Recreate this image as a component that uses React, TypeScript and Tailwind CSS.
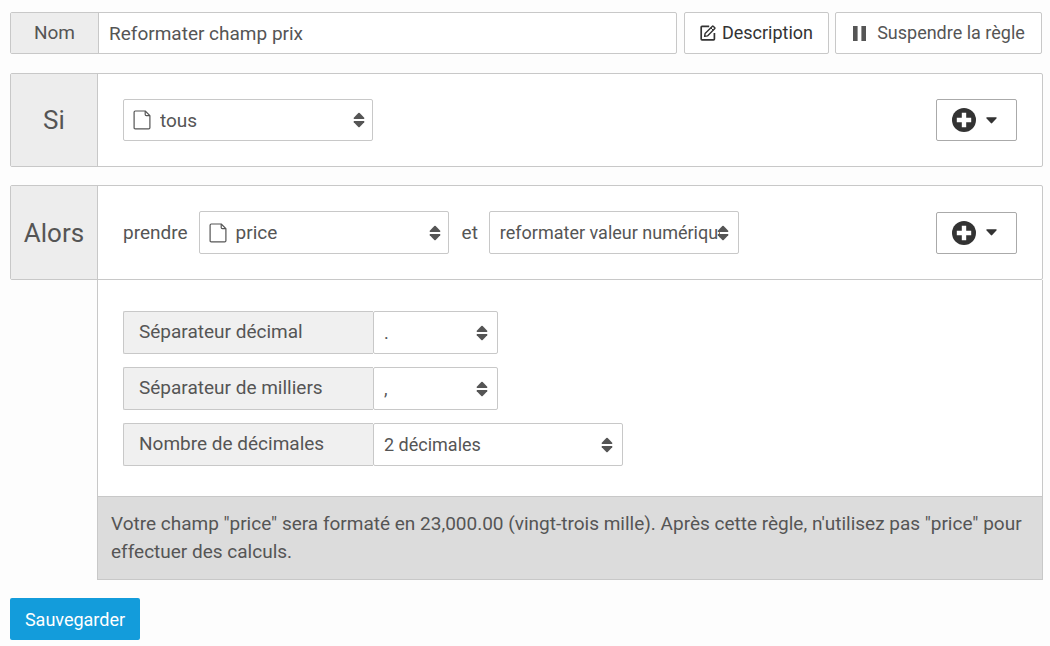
import {useState} from "react";
import type {ReactNode} from "react";

function SortArrows({className}: {className: string}) {
    return (
        <svg viewBox="0 0 12 16" className={`pointer-events-none absolute top-1/2 h-4 w-3 -translate-y-1/2 text-[#555] ${className}`} fill="currentColor" aria-hidden="true">
            <path d="M5.3 1 Q6 .3 6.7 1 L11.2 5.7 Q11.7 7 10.8 7 L1.2 7 Q.3 7 .8 5.7 Z" />
            <path d="M5.3 15 Q6 15.7 6.7 15 L11.2 10.3 Q11.7 9 10.8 9 L1.2 9 Q.3 9 .8 10.3 Z" />
        </svg>
    )
}

function FileIcon() {
    return (
        <svg viewBox="0 0 18 20" className="pointer-events-none absolute left-2.5 top-1/2 h-5 w-[18px] -translate-y-1/2 text-[#555]" fill="none" stroke="currentColor" strokeWidth="1.2" strokeLinejoin="round" aria-hidden="true">
            <path d="M2.3 1 H12.2 L16.9 5.6 V17.7 Q16.9 18.9 15.7 18.9 H2.3 Q1.1 18.9 1.1 17.7 V2.2 Q1.1 1 2.3 1 Z" />
            <path d="M12.2 1 V4.4 Q12.2 5.6 13.4 5.6 H16.9" />
        </svg>
    )
}

function Select({id, label, options, className = "", icon = false}: {id: string, label?: string, options: string[], className?: string, icon?: boolean}) {
    return (
        <div className={`relative ${className}`}>
            {icon ? <FileIcon /> : null}
            <select
                id={id}
                aria-label={label}
                className={`h-full w-full appearance-none rounded-xs border border-[#c8c8c8] bg-transparent pt-px pr-[18px] outline-none ${icon ? "pl-9" : "pl-2.5 text-lg"}`}
            >
                {options.map((option) => <option key={option}>{option}</option>)}
            </select>
            <SortArrows className={icon ? "right-2" : "right-2.5"} />
        </div>
    )
}

function AddButton({label}: {label: string}) {
    return (
        <button type="button" aria-label={label} className="ml-auto flex h-[42px] w-[81px] shrink-0 cursor-pointer items-center gap-2.5 rounded-xs border border-[#aaa] bg-white pl-[15px] text-[#333]">
            <svg viewBox="0 0 24 24" className="size-6" aria-hidden="true">
                <circle cx="12" cy="12" r="12" fill="currentColor" />
                <path d="M12 4.8 V19.2 M4.8 12 H19.2" stroke="white" strokeWidth="4.4" />
            </svg>
            <svg viewBox="0 0 11 7" className="h-[7px] w-[11px]" fill="currentColor" aria-hidden="true">
                <path d="M1 .3 H10 Q11.2 .5 10.4 1.6 L6.2 6.1 Q5.5 6.8 4.8 6.1 L.6 1.6 Q-.2 .5 1 .3 Z" />
            </svg>
        </button>
    )
}

function RulePanel({title, className, children}: {title: string, className: string, children: ReactNode}) {
    return (
        <section className={`flex rounded-xs border border-[#c8c8c8] bg-white ${className}`}>
            <h2 className="flex w-[87px] shrink-0 items-center justify-center border-r border-[#c8c8c8] bg-[#ededed] text-[26px]">{title}</h2>
            <div className="flex flex-1 items-center px-[25px]">{children}</div>
        </section>
    )
}

function SettingRow({id, label, options, selectClass}: {id: string, label: string, options: string[], selectClass: string}) {
    return (
        <div className="flex">
            <label htmlFor={id} className="flex w-[250px] items-center rounded-l-xs border border-r-0 border-[#c8c8c8] bg-[#f0f0f0] px-[15px] pb-0.5">{label}</label>
            <Select id={id} options={options} className={`h-[43px] ${selectClass}`} />
        </div>
    )
}

export default function App() {
    const [name, setName] = useState("Reformater champ prix")

    return (
        <main className="min-h-screen bg-[#fdfdfd] pt-3 pr-[7px] pl-2.5 font-['Roboto',sans-serif] text-[19px] leading-7 text-[#555]">
            <header className="mr-px mb-[19px] flex h-[42px] gap-1.5">
                <div className="mr-px flex flex-1 rounded-xs border border-[#c8c8c8] bg-white">
                    <label htmlFor="name" className="flex w-[88px] items-center justify-center border-r border-[#c8c8c8] bg-[#ededed]">Nom</label>
                    <input id="name" value={name} onChange={(e) => setName(e.target.value)} className="min-w-0 flex-1 px-2.5 pt-0.5 outline-none" />
                </div>
                <button type="button" className="flex w-[145px] cursor-pointer items-center justify-center gap-1.5 rounded-xs border border-[#c8c8c8] bg-white text-lg text-[#333]">
                    <svg viewBox="0 0 16 16" className="size-4" fill="none" stroke="currentColor" strokeWidth="1.7" strokeLinejoin="round" aria-hidden="true">
                        <path d="M9.2 1.3 H2 Q1.2 1.3 1.2 2.1 V14 Q1.2 14.8 2 14.8 H13.6 Q14.4 14.8 14.4 14 V8" />
                        <path d="M4.6 11.4 L5.1 8.5 L12.2 1.4 Q12.8 .8 13.4 1.4 L14.6 2.6 Q15.2 3.2 14.6 3.8 L7.5 10.9 Z" strokeWidth="1.4" />
                        <path d="M10.8 2.8 L13.2 5.2" strokeWidth="1" />
                    </svg>
                    Description
                </button>
                <button type="button" className="flex w-[207px] cursor-pointer items-center justify-center gap-2.5 rounded-xs border border-[#c8c8c8] bg-white text-lg">
                    <svg viewBox="0 0 15 16" className="h-4 w-[15px]" fill="currentColor" aria-hidden="true">
                        <rect x="1" y="1" width="4.6" height="15" />
                        <rect x="9.4" y="1" width="4.6" height="15" />
                    </svg>
                    Suspendre la règle
                </button>
            </header>

            <div className="mb-[18px]">
                <RulePanel title="Si" className="h-[94px]">
                    <Select id="condition" label="Si" options={["tous"]} className="h-[42px] w-[250px]" icon />
                    <AddButton label="Ajouter une condition" />
                </RulePanel>
            </div>

            <RulePanel title="Alors" className="h-[95px]">
                <label htmlFor="field">prendre</label>
                <Select id="field" options={["price"]} className="ml-[11px] h-[43px] w-[250px]" icon />
                <label htmlFor="action" className="ml-[13px]">et</label>
                <Select id="action" options={["reformater valeur numérique"]} className="ml-[11px] h-[43px] w-[250px]" />
                <AddButton label="Ajouter une action" />
            </RulePanel>

            <div className="ml-[87px] border border-t-0 border-[#c8c8c8] bg-white">
                <div className="flex flex-col gap-[13px] px-[25px] pt-[31px] pb-[30px]">
                    <SettingRow id="decimal" label="Séparateur décimal" options={[".", ","]} selectClass="w-[125px]" />
                    <SettingRow id="thousands" label="Séparateur de milliers" options={[",", "."]} selectClass="w-[125px]" />
                    <SettingRow id="decimals" label="Nombre de décimales" options={["2 décimales"]} selectClass="w-[250px]" />
                </div>
                <p className="border-t border-[#c8c8c8] bg-[#dcdcdc] px-[13px] py-[13px]">
                    Votre champ "price" sera formaté en 23,000.00 (vingt-trois mille). Après cette règle, n'utilisez pas "price" pour effectuer des calculs.
                </p>
            </div>

            <button type="button" className="mt-[18px] h-[42px] w-[130px] cursor-pointer rounded-xs bg-[#139cdb] pt-px text-center text-lg text-white">Sauvegarder</button>
        </main>
    )
}
